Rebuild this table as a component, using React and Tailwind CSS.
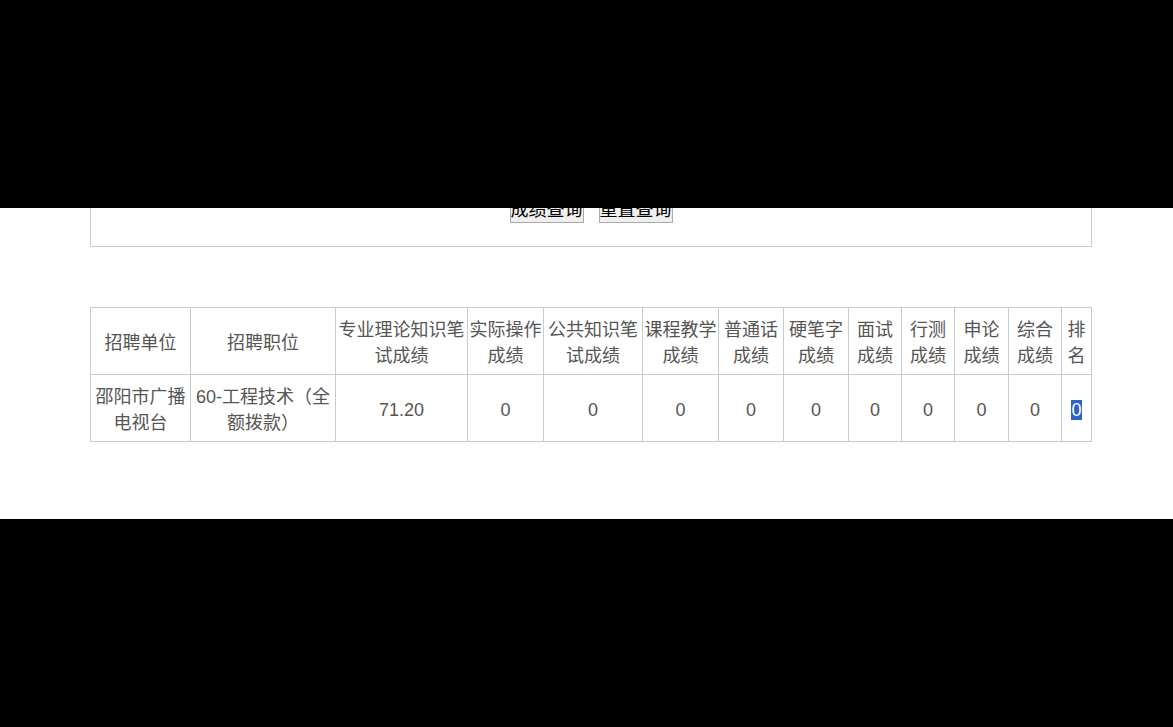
import React from 'react';

const headers = [
  '招聘单位',
  '招聘职位',
  '专业理论知识笔试成绩',
  '实际操作成绩',
  '公共知识笔试成绩',
  '课程教学成绩',
  '普通话成绩',
  '硬笔字成绩',
  '面试成绩',
  '行测成绩',
  '申论成绩',
  '综合成绩',
  '排名',
];

const widths = ['w-[100px]', 'w-[145px]', 'w-[132px]', 'w-[76px]', 'w-[99px]', 'w-[76px]', 'w-[65px]', 'w-[65px]', 'w-[53px]', 'w-[53px]', 'w-[54px]', 'w-[53px]', 'w-[30px]'];

const row = ['邵阳市广播电视台', '60-工程技术（全额拨款）', '71.20', '0', '0', '0', '0', '0', '0', '0', '0', '0'];

const cell = 'border border-[#c4cdcd] h-[67px] px-0 pt-[3px] text-center align-middle leading-[26px]';

const App = () => {
  return (
    <div className="w-[1173px] h-[727px] bg-black" style={{ fontFamily: '"Liberation Sans", "Noto Sans CJK SC", sans-serif' }}>
      <div className="h-[208px] bg-black" />

      <div className="h-[311px] bg-white overflow-hidden">
        {/* search box, top cut off by the black band */}
        <div className="ml-[90px] w-[1002px] h-[59px] mt-[-20px] border border-[#c4cdcd] flex justify-center gap-[15px] pt-[7px]">
          <button className="h-[27px] w-[74px] border border-[#a9a9a9] bg-[#efefef] text-black text-[18px] leading-none">
            成绩查询
          </button>
          <button className="h-[27px] w-[74px] border border-[#a9a9a9] bg-[#efefef] text-black text-[18px] leading-none">
            重置查询
          </button>
        </div>

        {/* results */}
        <table className="ml-[90px] mt-[60px] w-[1002px] table-fixed border-collapse text-[18px] text-[#555555]">
          <thead>
            <tr>
              {headers.map((h, i) => (
                <th key={h} className={`${cell} ${widths[i]} font-normal`}>
                  {h}
                </th>
              ))}
            </tr>
          </thead>
          <tbody>
            <tr>
              {row.map((v, i) => (
                <td key={i} className={cell}>
                  {v}
                </td>
              ))}
              <td className={cell}>
                <span className="bg-[#2f62c8] text-white">0</span>
              </td>
            </tr>
          </tbody>
        </table>
      </div>

      <div className="h-[208px] bg-black" />
    </div>
  );
};

export default App;
